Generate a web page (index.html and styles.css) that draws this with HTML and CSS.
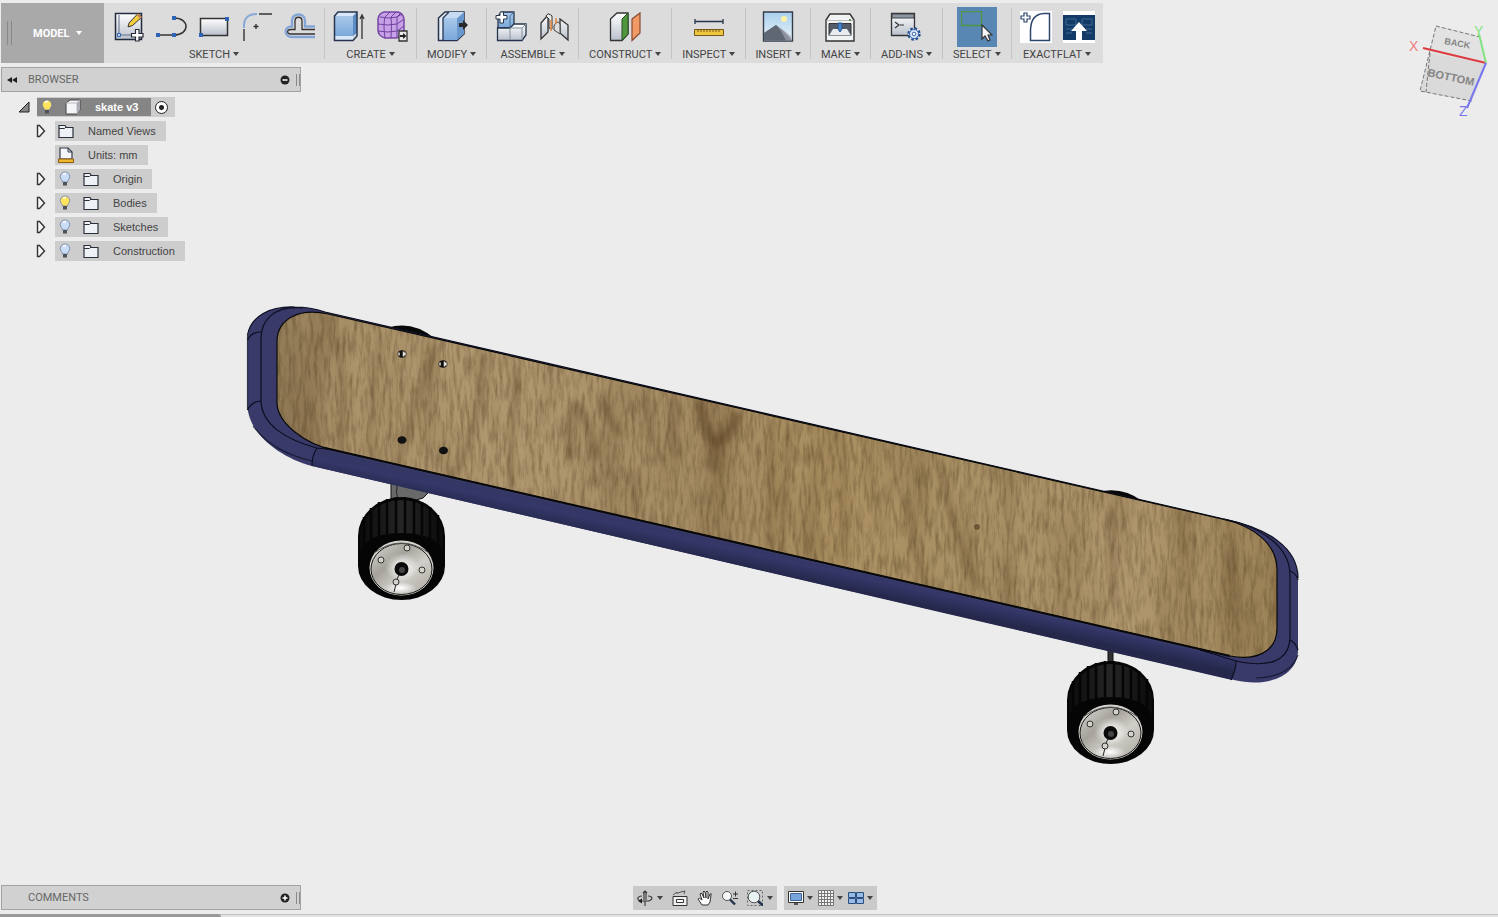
FILE: index.html
```html
<!DOCTYPE html>
<html lang="en">
<head>
  <meta charset="utf-8">
  <title>skate v3</title>
  <link rel="stylesheet" href="styles.css">
</head>
<body>
  <!-- shared icons -->
  <svg class="defs" aria-hidden="true">
    <defs>
      <linearGradient id="gWhite" x1="0" y1="0" x2="0" y2="1"><stop offset="0" stop-color="#fff"/><stop offset="1" stop-color="#b9c0cc"/></linearGradient>
      <linearGradient id="gBlue" x1="0" y1="0" x2="0" y2="1"><stop offset="0" stop-color="#a9c8ea"/><stop offset="1" stop-color="#7ba8da"/></linearGradient>
      <linearGradient id="gSky" x1="0" y1="0" x2="0" y2="1"><stop offset="0" stop-color="#a9cfec"/><stop offset="1" stop-color="#eaf4fa"/></linearGradient>
    </defs>
    <symbol id="folder" viewBox="0 0 16 16">
      <path d="M1 14.500V2.500h6l1.500 2H15v10z" fill="#eef1f6" stroke="#2b303b" stroke-width="1.200"/>
      <path d="M1 5.500h5.500l1.500-1.500" fill="none" stroke="#2b303b"/>
    </symbol>
    <symbol id="bulb" viewBox="0 0 12 16">
      <path d="M6 1a4.700 4.700 0 0 1 4.700 4.700C10.700 8 8.500 9 8.500 11h-5C3.500 9 1.300 8 1.300 5.700A4.700 4.700 0 0 1 6 1z" fill="currentColor" stroke="#71829f" stroke-width=".8"/>
      <path d="M4 11h4v3.500H4z" fill="#4d535d"/>
      <path d="M4 3.500q1.500-1.500 3-.8" stroke="#fff" fill="none" stroke-width="1.300"/>
    </symbol>
    <symbol id="arrow" viewBox="0 0 10 14">
      <path d="M1.500 1.500v11h2l5-5.500-5-5.500z" fill="#f4f4f4" stroke="#333" stroke-width="1.400"/>
    </symbol>
  </svg>

  <!-- 3d view -->
  <svg class="scene" viewBox="0 0 1498 917" preserveAspectRatio="xMidYMid slice" role="img" aria-label="Skateboard model">
    <defs>
      <linearGradient id="rail" gradientUnits="userSpaceOnUse" x1="700" y1="533" x2="695" y2="556">
        <stop offset="0" stop-color="#343663"/><stop offset=".4" stop-color="#343768"/><stop offset="1" stop-color="#25284b"/>
      </linearGradient>
      <linearGradient id="tire" x1="0" x2="1"><stop offset="0" stop-color="#0b0b0b"/><stop offset=".5" stop-color="#262626"/><stop offset="1" stop-color="#0b0b0b"/></linearGradient>
      <linearGradient id="hub" x1="0" y1="0" x2="1" y2="1"><stop offset="0" stop-color="#d9d8d3"/><stop offset=".35" stop-color="#a5a29b"/><stop offset=".6" stop-color="#d0cec8"/><stop offset="1" stop-color="#aaa79f"/></linearGradient>
      <radialGradient id="shine"><stop offset="0" stop-color="#fff"/><stop offset="1" stop-color="#fff" stop-opacity="0"/></radialGradient>
      <linearGradient id="wood" x1="0" x2="1">
        <stop offset="0" stop-color="#907a55"/><stop offset=".07" stop-color="#aa926a"/><stop offset=".25" stop-color="#b09870"/>
        <stop offset=".42" stop-color="#a38a62"/><stop offset=".55" stop-color="#ab9061"/><stop offset=".7" stop-color="#a99166"/><stop offset=".85" stop-color="#b0976e"/><stop offset="1" stop-color="#9c8357"/>
      </linearGradient>
      <filter id="grain" x="0" y="0" width="100%" height="100%" color-interpolation-filters="sRGB">
        <feTurbulence type="fractalNoise" baseFrequency=".28 .045" numOctaves="4" seed="7"/>
        <feColorMatrix values="0 0 0 0 .3  0 0 0 0 .22  0 0 0 0 .11  .9 0 0 0 -.36"/>
      </filter>
      <filter id="bands" x="0" y="0" width="100%" height="100%" color-interpolation-filters="sRGB">
        <feTurbulence type="fractalNoise" baseFrequency=".03 .006" numOctaves="2" seed="12"/>
        <feColorMatrix values="0 0 0 0 .4  0 0 0 0 .3  0 0 0 0 .17  .8 0 0 0 -.36"/>
      </filter>
      <filter id="soft"><feGaussianBlur stdDeviation="3"/></filter>
      <clipPath id="deck">
        <path d="M277 342C277 318 300 308 328 314L1222 519C1254 526 1277 544 1277 570V628C1277 652 1256 661 1230 656L333 450C306 444 277 424 277 402Z"/>
      </clipPath>
      <g id="wheel">
        <path d="M358 536A43.500 39 0 0 1 445 536V566A43.500 34 0 0 1 358 566Z" fill="#050505"/>
        <path d="M360 537A41.500 37 0 0 1 443 537V552Q437 533 401.500 533T360 552Z" fill="url(#tire)"/>
        <path d="M364 517v29M371 508v34M379 502v34M387 499v35M396 497v36M405 497v36M414 499v35M422 502v33M430 507v34M438 515v31" stroke="#050505" stroke-width="2.500"/>
        <ellipse cx="401.500" cy="568" rx="32" ry="27.500" fill="#d6d4ce"/>
        <ellipse cx="401.500" cy="569" rx="30.500" ry="25.500" fill="url(#hub)" stroke="#1b1b1b"/>
        <path d="M374 553Q401 533 429 553" fill="none" stroke="#555"/>
        <ellipse cx="401" cy="588" rx="16" ry="6" fill="url(#shine)"/>
        <ellipse cx="402" cy="567" rx="17" ry="14" fill="url(#shine)"/>
        <path d="M396 584l-2 8M397 579l3-6" stroke="#222"/>
        <g fill="#d5d2cb" stroke="#333"><circle cx="407" cy="548" r="3"/><circle cx="381" cy="560" r="3"/><circle cx="422" cy="570" r="3"/><circle cx="396" cy="582" r="3"/></g>
        <circle cx="401.500" cy="569" r="7" fill="#0a0a0a"/><circle cx="402" cy="570" r="3" fill="#444"/>
      </g>
      <g id="bolt"><ellipse rx="4.500" ry="3.800" fill="#111"/><path d="M-3-1.500v3M1.500-2.500v5M3-1.500v3" stroke="#e6e2da" stroke-width="1.500"/></g>
    </defs>

    <path d="M387 328Q412 320 434 338V345L387 334Z" fill="#080808"/>
    <path d="M1098 492Q1122 486 1142 501V508L1098 498Z" fill="#080808"/>
    <path d="M391 483L429 492 423 498 410 502 391 500Z" fill="#696969" stroke="#111"/>
    <path d="M397 486q-2 8 2 14" fill="none" stroke="#222"/>
    <path d="M1108 650h5v13h-5z" fill="#303030" stroke="#111"/>

    <path d="M247.500 337C250 316 270 306 295 307Q310 307 325 312L1224 519C1268 528 1298 548 1298 578V650C1298 676 1268 688 1234 680L312 466C278 457 247.500 432 247.500 405Z" fill="#393a69"/>
    <path d="M316 448L1236 660 1232 680 312 466Z" fill="url(#rail)"/>
    <g fill="none" stroke="#0c0e20" stroke-width="1.200">
      <path d="M247.500 335C251 316 270 306 295 307Q310 307 325 312L1224 519C1268 528 1298 548 1298 578"/>
      <path d="M303 308C273 305 261 321 261 339V400C261 425 287 440 317 448L334 450M1200 650L1236 661C1268 668 1290 662 1290 636V575C1290 547 1262 527 1224 519"/>
      <path d="M247.500 340Q251 332 261 332M247.500 410Q252 401 261 401M312 466Q312 455 317 448M1290 571Q1297 574 1298 580M1298 650Q1296 643 1290 640M1231 680Q1236 670 1236 661"/>
      <path d="M247.500 335V410M253 426Q272 452 312 461M1298 655Q1290 677 1256 678" stroke-opacity=".7"/>
    </g>

    <g clip-path="url(#deck)">
      <rect x="276" y="305" width="1002" height="360" fill="url(#wood)"/>
      <g fill="none" stroke="#65492b" stroke-opacity=".45" filter="url(#soft)">
        <path d="M325 315Q352 365 340 455" stroke-width="5"/>
        <path d="M380 335L368 455" stroke-width="4"/>
        <path d="M436 345Q422 385 410 420L395 470" stroke-width="6"/>
        <path d="M483 352Q481 430 452 480" stroke-width="6"/>
        <path d="M519 365Q510 425 511 490" stroke-width="5"/>
        <path d="M572 460Q565 410 577 405 586 415 598 460" stroke-width="8"/>
        <path d="M602 392Q602 415 622 435M645 395L652 445" stroke-width="7"/>
        <path d="M671 398L676 460M632 470L638 515" stroke-width="6"/>
        <path d="M700 400Q702 432 716 442 730 436 738 412" stroke-width="10" stroke-opacity=".7"/>
        <path d="M716 438L712 470" stroke-width="15"/>
        <path d="M773 420L768 550M790 425L780 565M844 440L845 560" stroke-width="4"/>
        <path d="M908 500Q910 540 928 590M940 460Q950 525 980 590" stroke-width="6"/>
        <path d="M1006 560L1008 610M1110 510L1115 610M1230 550L1240 650" stroke-width="8" stroke-opacity=".25"/>
      </g>
      <rect x="276" y="305" width="1002" height="360" filter="url(#bands)"/>
      <rect x="276" y="305" width="1002" height="360" filter="url(#grain)"/>
      <circle cx="977" cy="527" r="3" fill="#5b4026" fill-opacity=".7"/>
    </g>
    <path d="M277 342C277 318 300 308 328 314L1222 519C1254 526 1277 544 1277 570V628C1277 652 1256 661 1230 656L333 450C306 444 277 424 277 402Z" fill="none" stroke="#090909" stroke-width="1.200"/>
    <path d="M325 448L1230 656" stroke="#090909" stroke-width="2"/>
    <use href="#bolt" x="402" y="354"/><use href="#bolt" x="443" y="364"/>
    <ellipse cx="402" cy="440" rx="4.500" ry="3.800" fill="#111"/><ellipse cx="443.500" cy="450.500" rx="4.500" ry="3.800" fill="#111"/>
    <use href="#wheel"/>
    <use href="#wheel" x="709" y="164"/>
  </svg>

  <svg class="viewcube" viewBox="0 0 90 100" role="img" aria-label="View cube">
    <path d="M37 6L81 17 87 44 73 81 21 71 31 33Z" fill="#dadada"/>
    <path d="M37 6L81 17 87 44 31 33Z" fill="#e2e2e2"/>
    <path d="M37 6L81 17 87 44M73 81L21 71 37 6M31 33L27 72" fill="none" stroke="#777" stroke-dasharray="4 2"/>
    <path d="M24 28L87 43" stroke="#dc3c40" stroke-width="2"/>
    <path d="M87 43L80 14" stroke="#83e583" stroke-width="2"/>
    <path d="M87 43L68 88" stroke="#7777f0" stroke-width="2"/>
    <text class="face-small" transform="translate(45 24) rotate(10)">BACK</text>
    <text class="face" transform="translate(28 56) rotate(12)">BOTTOM</text>
    <text class="axis" x="10" y="31" fill="#f07c80">X</text>
    <text class="axis" x="75" y="16" fill="#83e583">Y</text>
    <text class="axis" x="60" y="96" fill="#7777f0">Z</text>
  </svg>

  <header class="toolbar">
    <div class="workspace"><i class="grip"></i><button class="mode">MODEL<i class="caret"></i></button></div>

    <div class="group wide">
      <div class="icons">
        <button aria-label="Create sketch"><svg viewBox="0 0 32 32">
          <path d="M3.500 2.500h26v26h-26z" fill="url(#gWhite)" stroke="#222b3d" stroke-width="1.500"/>
          <path d="M7 4v20h12" fill="none" stroke="#5f6f88"/><path d="M5.500 22.500h3v3h-3z" fill="#bcd4f2" stroke="#3465b5"/>
          <path d="M17 12L26 2.500 30 6 20.500 14.500 16 16z" fill="#f4ce3d" stroke="#333"/><path d="M24.500 4l3.500 4 2-2-4-3.500z" fill="#c78b55"/>
          <path d="M23.500 18.500h3.500v4h4v3.500h-4v4h-3.500v-4h-4v-3.500h4z" fill="#fff" stroke="#252a35" stroke-width="1.200"/></svg></button>
        <button aria-label="Line"><svg viewBox="0 0 32 32">
          <path d="M2 24h17c16 0 16-17 0-17" fill="none" stroke="#333" stroke-width="1.500"/><path d="M1 22h4v4H1zM17 22h4v4h-4zM17 5h4v4h-4z" fill="#2f63b7"/></svg></button>
        <button aria-label="Rectangle"><svg viewBox="0 0 32 32">
          <path d="M2.500 7.500h27v17h-27z" fill="url(#gWhite)" stroke="#333" stroke-width="1.500"/><path d="M27 6h4v4h-4zM1 22h4v4H1z" fill="#2f63b7"/></svg></button>
        <button aria-label="Fillet"><svg viewBox="0 0 32 32">
          <path d="M3 17Q2 3 16 3" fill="none" stroke="#88a9d8" stroke-width="2"/><path d="M18 3h13M3 18v12M12.500 15.500h5M15 13v5" stroke="#333" stroke-width="1.400"/></svg></button>
        <button aria-label="Offset"><svg viewBox="0 0 32 32">
          <path d="M31 15.500H21V9.500C21 1.500 8 1.500 8 9.500v6C-1 15.500 0 26 8 26h23" fill="none" stroke="#83a6d7" stroke-width="2.400"/>
          <path d="M31 18.500H18V10c0-5-7-5-7 0v8.500H7c-4.500 0-4.500 4.500 0 4.500h24" fill="none" stroke="#333" stroke-width="1.300"/></svg></button>
      </div>
      <button class="label">SKETCH<i class="caret"></i></button>
    </div>

    <div class="group wide">
      <div class="icons">
        <button aria-label="Extrude"><svg viewBox="0 0 32 32">
          <path d="M1.500 5L5 1h18l-3 4v24H1.500z" fill="#d9e8f8"/><path d="M1.500 5H20v20H1.500z" fill="url(#gBlue)"/><path d="M20 5l4-4v21l-4 3z" fill="#5c8cc3"/>
          <path d="M1.500 5L5 1h19v24l-4 4.500H1.500z" fill="none" stroke="#26354d" stroke-width="1.500"/><path d="M29 28V5M27 8l2-4 2 4" fill="none" stroke="#333" stroke-width="1.300"/></svg></button>
        <button aria-label="Create form"><svg viewBox="0 0 32 32">
          <path d="M8 1h14q6 2 6 8v10q-2 7-8 8H9Q2 25 2 19V8q1-6 6-7z" fill="#c6a1e8" stroke="#7546a4" stroke-width="1.500"/>
          <path d="M2 13q10 2 19 0l7-5M2 20q10 2 19 0l7-5M4 6q9 2 17 0l5-3M9 27Q7 14 9 6l5-5M15 27q1-13 0-21l5-5M21 26V6l4-4" fill="none" stroke="#6f419d"/>
          <path d="M23 20h8v10h-8z" fill="#ececec" stroke="#333" stroke-width="1.300"/><path d="M24 24h3v-2l3.500 3-3.500 3v-2h-3z" fill="#222"/></svg></button>
      </div>
      <button class="label">CREATE<i class="caret"></i></button>
    </div>

    <div class="group">
      <div class="icons">
        <button aria-label="Press pull"><svg viewBox="0 0 32 32">
          <path d="M2.500 7L9 1h19v22l-7 6.500H2.500z" fill="#e8edf5" stroke="#26354d" stroke-width="1.500"/><path d="M7 7h14v22H7z" fill="url(#gBlue)"/><path d="M21 7l7-6v22l-7 6z" fill="#6a97cc"/>
          <path d="M7 7l6-6h15l-7 6z" fill="#c5dbf3"/><path d="M7 29V7l6-6" fill="none" stroke="#26354d" stroke-width="1.300"/><path d="M23 12h4V9l5 5-5 5v-3h-4z" fill="#282828"/></svg></button>
      </div>
      <button class="label">MODIFY<i class="caret"></i></button>
    </div>

    <div class="group wide">
      <div class="icons">
        <button aria-label="New component"><svg viewBox="0 0 32 32">
          <path d="M3 5L7 1h12v13l-4 3H3z" fill="url(#gBlue)" stroke="#26354d" stroke-width="1.300"/><path d="M15 5v12M15 5l4-4" stroke="#47729e"/>
          <path d="M2.500 17H15l4-4h12v11l-4 5.500H2.500z" fill="url(#gWhite)" stroke="#26354d" stroke-width="1.300"/><path d="M15 17v12M15 17h12l4-4M27 17v12" fill="none" stroke="#8892a1"/>
          <path d="M5 1h3.500v3.500H12V8H8.500v4H5V8H1V4.500h4z" fill="#fff" stroke="#26354d"/></svg></button>
        <button aria-label="Joint"><svg viewBox="0 0 32 32">
          <path d="M3 12l7-8v17l-7 7zM22 8l8 6v15l-8-7z" fill="url(#gWhite)" stroke="#333" stroke-width="1.300"/>
          <path d="M8 5q2-4 6 0v13l-3-1V8z" fill="#eee" stroke="#333"/><path d="M16 15q3-7 6-2v10l-6-4z" fill="#ddd" stroke="#444"/><path d="M13 9v11M18 7v6" stroke="#e58a43" stroke-width="1.600"/></svg></button>
      </div>
      <button class="label">ASSEMBLE<i class="caret"></i></button>
    </div>

    <div class="group">
      <div class="icons">
        <button aria-label="Offset plane"><svg viewBox="0 0 32 32">
          <path d="M1.500 8L8 2h11v21l-6 6.500H1.500z" fill="url(#gWhite)" stroke="#333" stroke-width="1.300"/><path d="M13 8l6-6v21l-6 6.500z" fill="#4f963f" stroke="#295023"/>
          <path d="M23 8l8-6v20l-8 7.500z" fill="#f19a65" stroke="#8a4930" stroke-width="1.200"/></svg></button>
      </div>
      <button class="label">CONSTRUCT<i class="caret"></i></button>
    </div>

    <div class="group">
      <div class="icons">
        <button aria-label="Measure"><svg viewBox="0 0 32 32">
          <path d="M2 10.500h28M2 8v5M30 8v5" stroke="#26354d" stroke-width="1.300"/><path d="M1.500 18.500h29v6h-29z" fill="#eec63e" stroke="#755719"/><path d="M5 19v2M8 19v2M11 19v2M14 19v2M17 19v2M20 19v2M23 19v2M26 19v2" stroke="#755719"/></svg></button>
      </div>
      <button class="label">INSPECT<i class="caret"></i></button>
    </div>

    <div class="group slim">
      <div class="icons">
        <button aria-label="Insert image"><svg viewBox="0 0 32 32">
          <path d="M1.500 1h29v29h-29z" fill="url(#gSky)" stroke="#333d4c" stroke-width="1.400"/><circle cx="22" cy="8" r="3" fill="#fff4a5"/><path d="M2 22l12-8 3 2 13 11v2.500H2z" fill="#8a909c"/><path d="M2 22l12-8 5 6 5 9.500H2z" fill="#5f6674"/><path d="M18 16l12 10v3z" fill="#b9bec7"/></svg></button>
      </div>
      <button class="label">INSERT<i class="caret"></i></button>
    </div>

    <div class="group">
      <div class="icons">
        <button aria-label="3D print"><svg viewBox="0 0 32 32">
          <path d="M2 9L6 3h20l4 6v21H2z" fill="#f1f2f4" stroke="#333" stroke-width="1.400"/><path d="M2.500 9.500h27" stroke="#bbb"/><path d="M5 12.500h22v12H5z" fill="#555d69" stroke="#333"/>
          <path d="M9 18h14l4 6.500H5z" fill="#e8ebef"/><path d="M14 12h4v6l-2 3-2-3z" fill="#4a86cc" stroke="#24518c"/><circle cx="26" cy="9" r="1" fill="#417b3b"/></svg></button>
      </div>
      <button class="label">MAKE<i class="caret"></i></button>
    </div>

    <div class="group">
      <div class="icons">
        <button aria-label="Scripts and add-ins"><svg viewBox="0 0 32 32">
          <path d="M1.500 2.500h23v22h-23z" fill="url(#gWhite)" stroke="#333" stroke-width="1.300"/><path d="M2 3h22v4H2z" fill="#8d96a5" stroke="#444"/><path d="M5 11l4 3-4 3M10 14h4" fill="none" stroke="#333" stroke-width="1.200"/>
          <circle cx="24" cy="23" r="5.500" fill="#dbe7fa" stroke="#244d8c" stroke-width="2.400" stroke-dasharray="2.500 1.800"/><circle cx="24" cy="23" r="4.500" fill="#dbe7fa" stroke="#3b68aa"/><circle cx="24" cy="23" r="1.800" fill="#fff" stroke="#3b68aa"/></svg></button>
      </div>
      <button class="label">ADD-INS<i class="caret"></i></button>
    </div>

    <div class="group">
      <div class="icons">
        <button class="active" aria-label="Select"><svg viewBox="0 0 32 32">
          <path d="M.5.500h20v14H.500z" fill="none" stroke="#4e9747" stroke-width="1.400"/><path d="M21 14v14l3-3 3 5 2-1-2-5h4z" fill="#f7f7f7" stroke="#333" stroke-width="1.200"/></svg></button>
      </div>
      <button class="label">SELECT<i class="caret"></i></button>
    </div>

    <div class="group wide">
      <div class="icons">
        <button aria-label="ExactFlat pattern"><svg viewBox="0 0 32 32">
          <path d="M0 0h32v32H0z" fill="#fff"/><path d="M10.500 29.500V19Q11 3 24 2.500h5.500v27z" fill="#fff" stroke="#2c456c" stroke-width="1.500"/><path d="M4 2h3v3h3v3H7v3H4V8H1V5h3z" fill="#fff" stroke="#2c456c" stroke-width="1.200"/></svg></button>
        <button aria-label="ExactFlat export"><svg viewBox="0 0 32 32">
          <path d="M0 0h32v32H0z" fill="#fff"/><path d="M0 4h32v25H0z" fill="#123c67"/><path d="M3 8h10v6H3zM19 8h10v6H19zM3 18h6M23 18h6M3 22h6M23 22h6" fill="none" stroke="#41678f"/><path d="M16 11l8 9h-5v9h-6v-9H8z" fill="#fff"/></svg></button>
      </div>
      <button class="label">EXACTFLAT<i class="caret"></i></button>
    </div>
  </header>

  <main class="workspace-area">
    <section class="browser">
      <div class="panel">
        <svg class="rewind" viewBox="0 0 10 8"><path d="M5 1v6L0 4zM10 1v6L5 4z"/></svg>
        <span>BROWSER</span>
        <button class="round" aria-label="Collapse"><svg viewBox="0 0 10 10"><circle cx="5" cy="5" r="4.500"/><path d="M2.500 5h5" stroke="#fff" stroke-width="1.500"/></svg></button>
        <i class="grip"></i>
      </div>
      <ul class="tree">
        <li class="root">
          <button class="toggle" aria-label="Collapse skate v3"><svg class="open" viewBox="0 0 12 12"><path d="M11 1v10H1z" fill="#888" stroke="#222"/></svg></button>
          <div class="node">
            <button class="item selected"><svg class="bulb on"><use href="#bulb"/></svg><svg class="cube" viewBox="0 0 16 16"><path d="M1 4l4-3h10v10l-3 4H1z" fill="#f4f5f7" stroke="#444"/><path d="M1 4h11l3-3M12 4v11" fill="none" stroke="#bbb"/><path d="M12 4l3-3v10l-3 4z" fill="#a9adb3"/></svg><span>skate v3</span></button>
            <input type="radio" checked aria-label="Activate skate v3">
          </div>
        </li>
        <li><button class="toggle" aria-label="Expand Named Views"><svg><use href="#arrow"/></svg></button><button class="item"><svg class="folder"><use href="#folder"/></svg><span>Named Views</span></button></li>
        <li><i class="toggle"></i><button class="item"><svg class="folder" viewBox="0 0 16 16"><path d="M2 12V1h8l4 4v7z" fill="#f4f6fa" stroke="#333b4a" stroke-width="1.200"/><path d="M10 1v4h4" fill="none" stroke="#333b4a"/><path d="M.5 12h15v3.500H.500z" fill="#efb92f" stroke="#8b5b12"/></svg><span>Units: mm</span></button></li>
        <li><button class="toggle" aria-label="Expand Origin"><svg><use href="#arrow"/></svg></button><button class="item"><svg class="bulb"><use href="#bulb"/></svg><svg class="folder"><use href="#folder"/></svg><span>Origin</span></button></li>
        <li><button class="toggle" aria-label="Expand Bodies"><svg><use href="#arrow"/></svg></button><button class="item"><svg class="bulb on"><use href="#bulb"/></svg><svg class="folder"><use href="#folder"/></svg><span>Bodies</span></button></li>
        <li><button class="toggle" aria-label="Expand Sketches"><svg><use href="#arrow"/></svg></button><button class="item"><svg class="bulb"><use href="#bulb"/></svg><svg class="folder"><use href="#folder"/></svg><span>Sketches</span></button></li>
        <li><button class="toggle" aria-label="Expand Construction"><svg><use href="#arrow"/></svg></button><button class="item"><svg class="bulb"><use href="#bulb"/></svg><svg class="folder"><use href="#folder"/></svg><span>Construction</span></button></li>
      </ul>
    </section>
  </main>

  <footer class="bottom">
    <div class="panel comments">
      <span>COMMENTS</span>
      <button class="round" aria-label="Add comment"><svg viewBox="0 0 10 10"><circle cx="5" cy="5" r="4.500"/><path d="M2.500 5h5M5 2.500v5" stroke="#fff" stroke-width="1.500"/></svg></button>
      <i class="grip"></i>
    </div>
    <nav class="navbar">
      <div class="tools">
        <button aria-label="Orbit"><svg viewBox="0 0 16 16"><path d="M7 10V2h2v8M8 11v5M6 3l2-2 2 2M11 6c4 0 6 3 1 5H2M5 6C1 6-1 9 3 11" fill="none" stroke="#333" stroke-width="1.100"/><path d="M1 11l4-2.500v5z" fill="#222"/></svg><i class="caret"></i></button>
        <button aria-label="Look at"><svg viewBox="0 0 16 16"><path d="M1 6.500h14v9H1z" fill="#eee" stroke="#333"/><path d="M4.500 9.500h7v3h-7z" fill="#fff" stroke="#333"/><path d="M1 5l4-3v1.500q4-2 8-2.500l-1 3" fill="none" stroke="#555"/></svg></button>
        <button aria-label="Pan"><svg viewBox="0 0 16 16"><path d="M5 15L1 9q1-2 4 1L3 4q1-2 2 0l2 4-1-6q1-2 2 0l1 6V2q1-2 2 0v7l2-5q2-1 1 1l-1 7-2 3z" fill="#fff" stroke="#333"/></svg></button>
        <button aria-label="Zoom"><svg viewBox="0 0 16 16"><circle cx="5" cy="6" r="4.500" fill="#f5f7fa" stroke="#555"/><path d="M8 9.500l5 5" stroke="#26354d" stroke-width="2.400"/><path d="M11 4h5M13.500 1.500v5M11 8.500h5" stroke="#333"/></svg></button>
        <button aria-label="Fit"><svg viewBox="0 0 16 16"><path d="M.5.500h15v15H.500z" fill="none" stroke="#666" stroke-dasharray="2 2"/><circle cx="7" cy="7" r="5.800" fill="#e9f3f3" stroke="#555"/><path d="M11 11l5 4.500" stroke="#26354d" stroke-width="2.600"/></svg><i class="caret"></i></button>
      </div>
      <div class="tools">
        <button aria-label="Display settings"><svg viewBox="0 0 16 16"><path d="M.5 1.500h15v11H.500z" fill="#fff" stroke="#333"/><path d="M2.500 3.500h11v7h-11z" fill="#78a5dc" stroke="#3d6799"/><path d="M6 13h4v2H6z" fill="#555"/></svg><i class="caret"></i></button>
        <button aria-label="Grid and snaps"><svg viewBox="0 0 16 16"><path d="M.5.500h15v15H.500z" fill="#f2f2f2"/><path d="M.5.500h15v15H.500zM3.500 0v16M6.500 0v16M9.500 0v16M12.500 0v16M0 3.500h16M0 6.500h16M0 9.500h16M0 12.500h16" fill="none" stroke="#777"/></svg><i class="caret"></i></button>
        <button aria-label="Viewports"><svg viewBox="0 0 16 16"><path d="M.5 2.500h7v5h-7zM8.500 2.500h7v5h-7zM.5 8.500h7v5h-7zM8.500 8.500h7v5h-7z" fill="#98bbe5" stroke="#294f80"/></svg><i class="caret"></i></button>
      </div>
    </nav>
  </footer>
  <div class="timeline"><div class="thumb"></div></div>
</body>
</html>
```
FILE: styles.css
```css
* {
  box-sizing: border-box;
}
body {
  margin: 0;
  min-height: 100vh;
  background: #ececec;
  color: #444;
  font-family: Roboto, "Liberation Sans", Arial, sans-serif;
  font-size: 11px;
  display: flex;
  flex-direction: column;
  position: relative;
  overflow: hidden;
}
button {
  border: none;
  background: none;
  padding: 0;
  margin: 0;
  color: inherit;
  font: inherit;
  cursor: pointer;
}
svg { display: block; }
.defs { position: absolute; width: 0; height: 0; }
.scene {
  position: absolute;
  inset: 0;
  width: 100%;
  height: 100%;
  z-index: -1;
}
.viewcube {
  position: absolute;
  top: 20px;
  right: 9px;
  width: 90px;
  height: 100px;
}
.viewcube text { font-family: "Liberation Sans", Arial, sans-serif; }
.face, .face-small { fill: #858585; font-weight: bold; font-size: 11px; }
.face-small { font-size: 9px; }
.axis { font-size: 14px; }

.caret {
  display: inline-block;
  border: 3px solid transparent;
  border-top: 4px solid currentColor;
  border-bottom: none;
}
.grip {
  width: 4px;
  height: 12px;
  border: 1px solid #888;
  border-width: 0 1px;
}

/* toolbar */
.toolbar {
  align-self: flex-start;
  display: flex;
  height: 60px;
  margin: 3px 0 0 1px;
  background: #dcdcdc;
}
.workspace {
  width: 103px;
  background: #a9a9a9;
  display: flex;
  align-items: center;
  padding-left: 6px;
}
.workspace .grip { height: 24px; width: 5px; }
.mode {
  margin-left: 21px;
  color: #fff;
  font-weight: bold;
}
.mode .caret { margin: 0 0 2px 6px; }
.group {
  position: relative;
  display: flex;
  flex-direction: column;
  align-items: center;
  padding: 4px 7px 0;
}
.group.wide { padding: 4px 8px 0; }
.group.slim { padding: 4px 6px 0; }
.group + .group { border-left: 1px solid #dcdcdc; }
.group + .group::before {
  content: "";
  position: absolute;
  left: -1px;
  top: 5px;
  width: 1px;
  height: 51px;
  background: #c4c4c4;
}
.icons { display: flex; gap: 11px; }
.icons button { padding: 4px 0; }
.icons svg { width: 32px; height: 32px; }
.icons .active { background: #5887b3; padding: 4px; }
.label {
  padding: 0 3px;
  line-height: 16px;
  white-space: nowrap;
}
.label .caret { margin: 0 0 2px 3px; }

/* panels */
.panel {
  width: 300px;
  height: 25px;
  margin-left: 1px;
  padding: 0 0 0 5px;
  display: flex;
  align-items: center;
  background: #d1d1d1;
  border: 1px solid #a3a3a3;
  color: #666;
}
.panel span { flex: 1; margin-left: 11px; }
.rewind { width: 10px; height: 8px; fill: #222; }
.round svg { width: 10px; height: 10px; fill: #222; }
.panel .grip { margin-left: 6px; }
.comments span { margin-left: 21px; }
.workspace-area { flex: 1; padding-top: 4px; }

/* tree */
.tree {
  list-style: none;
  margin: 5px 0 0;
  padding: 0 0 0 36px;
  font-family: "Liberation Sans", Arial, sans-serif;
  display: flex;
  flex-direction: column;
  gap: 4px;
}
.tree li { display: flex; height: 20px; }
.tree .root { margin-left: -18px; }
.toggle { width: 19px; display: flex; align-items: center; }
.toggle svg { width: 10px; height: 14px; }
.toggle .open { width: 12px; height: 12px; }
.node { display: flex; align-items: center; background: #cdcdcd; padding-right: 7px; }
.item {
  height: 20px;
  background: #cdcdcd;
  display: flex;
  align-items: center;
  padding: 0 10px 0 3px;
  white-space: nowrap;
}
.item span { margin-left: 14px; }
.item .folder { width: 16px; height: 16px; }
.item .bulb { width: 12px; height: 16px; margin: 0 12px 0 1px; color: #c9ddf8; }
.item .bulb.on { color: #ffe45c; }
.cube { width: 16px; height: 16px; }
.selected { height: 18px; padding-right: 13px; background: #858585; color: #fff; font-weight: bold; }
.node input {
  appearance: none;
  width: 13px;
  height: 13px;
  margin: 0 0 0 4px;
  border: 1px solid #222;
  border-radius: 50%;
  background: radial-gradient(circle, #222 0 2px, #fff 3px);
}

/* bottom bar */
.bottom {
  display: grid;
  grid-template-columns: 1fr auto 1fr;
  align-items: center;
  margin-bottom: 4px;
}
.navbar { display: flex; gap: 7px; padding-left: 12px; }
.tools {
  height: 24px;
  padding: 0 4px;
  display: flex;
  align-items: center;
  gap: 9px;
  background: #cacaca;
}
.tools button { display: flex; align-items: center; gap: 4px; }
.tools svg { width: 16px; height: 16px; }
.tools + .tools { gap: 5px; }
.tools + .tools button { gap: 3px; }
.timeline { height: 3px; background: #e2e2e2; border-top: 1px solid #c2c2c2; }
.thumb { width: 221px; max-width: 50%; height: 3px; margin-top: -1px; background: #999; border-radius: 0 3px 0 0; }
```
